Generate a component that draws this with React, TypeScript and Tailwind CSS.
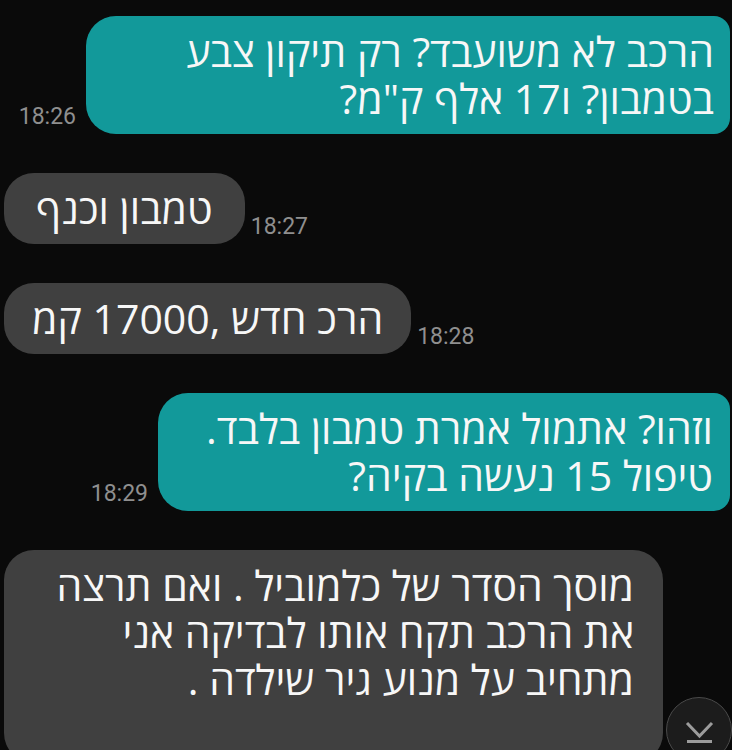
type Msg = {
    out: boolean;
    lines: string[];
    time?: string;
    width: string;
};

// שיחה - הודעות יוצאות בטורקיז, נכנסות באפור
const messages: Msg[] = [
    { out: true, lines: ["הרכב לא משועבד? רק תיקון צבע", "בטמבון? ו17 אלף ק\"מ?"], time: "18:26", width: "w-[644px] pr-[16px]" },
    { out: false, lines: ["טמבון וכנף"], time: "18:27", width: "px-[32px]" },
    { out: false, lines: ["הרכ חדש ,17000 קמ"], time: "18:28", width: "px-[28px]" },
    { out: true, lines: ["וזהו? אתמול אמרת טמבון בלבד.", "טיפול 15 נעשה בקיה?"], time: "18:29", width: "w-[572px] pr-[17px]" },
    { out: false, lines: ["מוסך הסדר של כלמוביל . ואם תרצה", "את הרכב תקח אותו לבדיקה אני", "מתחיב על מנוע גיר שילדה ."], width: "w-[659px] pr-[29px] pb-[60px]" },
];

const Time = ({ t }: { t: string }) => (
    <span className="mb-[6px] font-['Roboto',sans-serif] text-[23px] leading-none text-[#8f8f8f]">{t}</span>
);

const App = () => {
    return (
        <main className="relative h-[750px] w-full overflow-hidden bg-[#0a0a0a] font-['Open_Sans','Liberation_Sans',sans-serif]">
            <div className="flex flex-col gap-[39px] pt-[16px] pl-[4px] pr-[2px]">
                {messages.map((m, i) => (
                    <div key={i} className={m.out ? "flex items-end justify-end gap-[10px]" : "flex items-end gap-[6px]"}>
                        {m.out && m.time && <Time t={m.time} />}
                        <div
                            dir="rtl"
                            className={
                                (m.out
                                    ? "rounded-l-[30px] rounded-r-[16px] bg-[#12999a] "
                                    : "rounded-[30px] bg-[#404040] ") +
                                "py-[12px] text-[41px] leading-[47px] text-[#f7f7f7] " +
                                m.width
                            }
                        >
                            {m.lines.map((l, j) => (
                                <div key={j} className="whitespace-nowrap">{l}</div>
                            ))}
                        </div>
                        {!m.out && m.time && <Time t={m.time} />}
                    </div>
                ))}
            </div>

            {/* כפתור גלילה למטה */}
            <button className="absolute left-[666px] top-[697px] h-[66px] w-[66px] rounded-full border border-[#4a4a4a] bg-[#1c1c1c]">
                <svg width="66" height="66" viewBox="0 0 66 66" className="absolute -left-px -top-px">
                    <polyline points="21,26 33.5,39 46,26" fill="none" stroke="#9c9c9c" strokeWidth="3" />
                    <line x1="21" y1="44.5" x2="46" y2="44.5" stroke="#9c9c9c" strokeWidth="3" />
                </svg>
            </button>
        </main>
    );
};

export default App;
